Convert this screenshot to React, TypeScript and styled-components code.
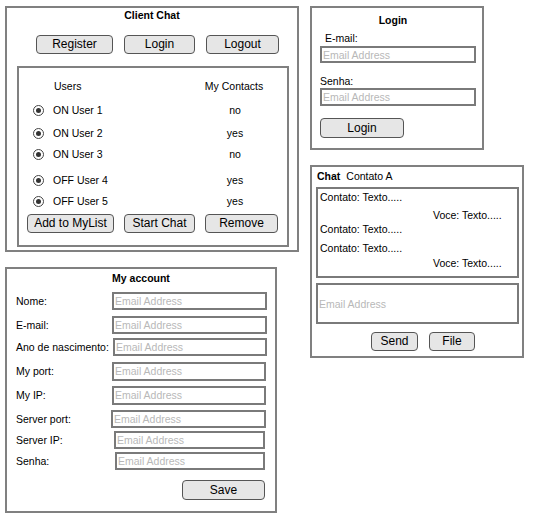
import React from "react";
import styled, { createGlobalStyle } from "styled-components";

const GlobalStyle = createGlobalStyle`
	body {
		margin: 0;
		background: #fff;
		font-family: "Liberation Sans", Arial, sans-serif;
		color: #000;
	}
`;

const Page = styled.div`
	display: flex;
	gap: 11px;
	padding: 6px 0 0 5px;
	font-size: 10.5px;
	line-height: 14px;
`;

const Column = styled.div`
	display: flex;
	flex-direction: column;
	gap: 15px;
	align-items: flex-start;
`;

const Panel = styled.div<{ $w: number; $h: number }>`
	box-sizing: border-box;
	width: ${(p) => p.$w}px;
	height: ${(p) => p.$h}px;
	border: 2px solid #808080;
	display: flex;
	flex-direction: column;
	align-items: flex-start;
`;

const Title = styled.div<{ $mt: number; $pr?: number }>`
	align-self: stretch;
	margin-top: ${(p) => p.$mt}px;
	padding-right: ${(p) => p.$pr || 0}px;
	text-align: center;
	font-weight: bold;
	line-height: 14px;
`;

const Button = styled.button<{ $w: number; $h?: number }>`
	box-sizing: border-box;
	width: ${(p) => p.$w}px;
	height: ${(p) => p.$h || 19}px;
	padding: 0 0 1px;
	border: 1px solid #555;
	border-radius: 4px;
	background: #e6e6e6;
	font-family: "Liberation Sans", Arial, sans-serif;
	font-size: 12px;
	color: #000;
	flex: none;
`;

const ButtonRow = styled.div<{ $mt: number; $pl: number; $gap: number }>`
	display: flex;
	gap: ${(p) => p.$gap}px;
	margin-top: ${(p) => p.$mt}px;
	padding-left: ${(p) => p.$pl}px;
`;

const UserBox = styled.div`
	box-sizing: border-box;
	margin: 12px 0 0 10px;
	width: 272px;
	height: 181px;
	border: 2px solid #808080;
	display: flex;
	flex-direction: column;
`;

const HeaderRow = styled.div`
	display: flex;
	height: 16px;
	align-items: center;
	margin-top: 10px;
`;

const UsersHead = styled.div`
	width: 140px;
	padding-left: 35px;
`;

const ContactCell = styled.div`
	width: 80px;
	text-align: center;
`;

const UserRow = styled.div<{ $mt: number }>`
	display: flex;
	align-items: center;
	height: 20px;
	margin-top: ${(p) => p.$mt}px;
`;

const Radio = styled.span`
	box-sizing: border-box;
	width: 11px;
	height: 11px;
	margin-left: 14px;
	border: 1.5px solid #444;
	border-radius: 50%;
	display: flex;
	align-items: center;
	justify-content: center;
	&::after {
		content: "";
		width: 5px;
		height: 5px;
		border-radius: 50%;
		background: #333;
	}
`;

const UserName = styled.span`
	width: 142px;
	margin-left: 9px;
`;

const FieldLabel = styled.div<{ $mt: number; $pl: number }>`
	margin-top: ${(p) => p.$mt}px;
	padding-left: ${(p) => p.$pl}px;
	line-height: 14px;
`;

const Field = styled.input<{ $w: number; $h: number; $ml?: number; $mt?: number }>`
	box-sizing: border-box;
	width: ${(p) => p.$w}px;
	height: ${(p) => p.$h}px;
	margin: ${(p) => p.$mt || 0}px 0 0 ${(p) => p.$ml || 0}px;
	padding: 0 0 0 1px;
	border: 2px solid #7a7a7a;
	border-radius: 0;
	outline: none;
	font-family: "Liberation Sans", Arial, sans-serif;
	font-size: 10.5px;
	&::placeholder {
		color: #b8b8b8;
	}
`;

const ChatTitle = styled.div`
	margin-top: 2px;
	padding-left: 5px;
	line-height: 14px;
	b {
		margin-right: 6px;
	}
`;

const MessageBox = styled.div`
	box-sizing: border-box;
	width: 203px;
	height: 91px;
	margin: 4px 0 0 4px;
	border: 2px solid #7a7a7a;
	display: flex;
	flex-direction: column;
`;

const Message = styled.div<{ $mt: number; $indent: number }>`
	margin-top: ${(p) => p.$mt}px;
	padding-left: ${(p) => p.$indent}px;
	line-height: 14px;
`;

const AccountRow = styled.div<{ $mt: number }>`
	display: flex;
	align-items: center;
	height: 18px;
	margin-top: ${(p) => p.$mt}px;
`;

const AccountLabel = styled.span`
	width: 96px;
	padding-left: 9px;
	flex: none;
`;

const users = [
	{ name: "ON User 1", contact: "no", mt: 6 },
	{ name: "ON User 2", contact: "yes", mt: 3 },
	{ name: "ON User 3", contact: "no", mt: 1 },
	{ name: "OFF User 4", contact: "yes", mt: 6 },
	{ name: "OFF User 5", contact: "yes", mt: 1 },
];

const messages = [
	{ text: "Contato: Texto.....", mt: 1, indent: 2 },
	{ text: "Voce: Texto.....", mt: 4, indent: 115 },
	{ text: "Contato: Texto.....", mt: 0, indent: 2 },
	{ text: "Contato: Texto.....", mt: 5, indent: 2 },
	{ text: "Voce: Texto.....", mt: 1, indent: 115 },
];

// x = left edge of the input inside the panel, r = right edge
const account = [
	{ label: "Nome:", mt: 7, x: 112, r: 267, h: 18 },
	{ label: "E-mail:", mt: 6, x: 112, r: 267, h: 18 },
	{ label: "Ano de nascimento:", mt: 4, x: 113, r: 267, h: 18 },
	{ label: "My port:", mt: 6, x: 112, r: 266, h: 19 },
	{ label: "My IP:", mt: 6, x: 112, r: 266, h: 19 },
	{ label: "Server port:", mt: 6, x: 111, r: 266, h: 18 },
	{ label: "Server IP:", mt: 3, x: 114, r: 265, h: 18 },
	{ label: "Senha:", mt: 3, x: 115, r: 265, h: 18 },
];

const ClientChat = () => (
	<Panel $w={294} $h={246}>
		<Title $mt={0}>Client Chat</Title>
		<ButtonRow $mt={13} $pl={29} $gap={11}>
			<Button $w={77}>Register</Button>
			<Button $w={71}>Login</Button>
			<Button $w={73}>Logout</Button>
		</ButtonRow>
		<UserBox>
			<HeaderRow>
				<UsersHead>Users</UsersHead>
				<ContactCell>My Contacts</ContactCell>
			</HeaderRow>
			{users.map((u) => (
				<UserRow key={u.name} $mt={u.mt}>
					<Radio />
					<UserName>{u.name}</UserName>
					<ContactCell>{u.contact}</ContactCell>
				</UserRow>
			))}
			<ButtonRow $mt={3} $pl={8} $gap={10}>
				<Button $w={87}>Add to MyList</Button>
				<Button $w={71}>Start Chat</Button>
				<Button $w={73}>Remove</Button>
			</ButtonRow>
		</UserBox>
	</Panel>
);

const MyAccount = () => (
	<Panel $w={272} $h={246}>
		<Title $mt={2}>My account</Title>
		{account.map((a) => (
			<AccountRow key={a.label} $mt={a.mt}>
				<AccountLabel>{a.label}</AccountLabel>
				<Field
					placeholder="Email Address"
					$w={a.r - a.x}
					$h={a.h}
					$ml={a.x - 112}
				/>
			</AccountRow>
		))}
		<ButtonRow $mt={10} $pl={175} $gap={0}>
			<Button $w={83} $h={20}>
				Save
			</Button>
		</ButtonRow>
	</Panel>
);

const Login = () => (
	<Panel $w={174} $h={144}>
		<Title $mt={5} $pr={8}>
			Login
		</Title>
		<FieldLabel $mt={4} $pl={13}>
			E-mail:
		</FieldLabel>
		<Field placeholder="Email Address" $w={156} $h={17} $ml={8} $mt={1} />
		<FieldLabel $mt={11} $pl={8}>
			Senha:
		</FieldLabel>
		<Field placeholder="Email Address" $w={156} $h={18} $ml={8} />
		<ButtonRow $mt={12} $pl={8} $gap={0}>
			<Button $w={84} $h={20}>
				Login
			</Button>
		</ButtonRow>
	</Panel>
);

const Chat = () => (
	<Panel $w={214} $h={193}>
		<ChatTitle>
			<b>Chat</b>Contato A
		</ChatTitle>
		<MessageBox>
			{messages.map((m, i) => (
				<Message key={i} $mt={m.mt} $indent={m.indent}>
					{m.text}
				</Message>
			))}
		</MessageBox>
		<Field placeholder="Email Address" $w={203} $h={41} $ml={4} $mt={5} />
		<ButtonRow $mt={8} $pl={59} $gap={11}>
			<Button $w={47}>Send</Button>
			<Button $w={46}>File</Button>
		</ButtonRow>
	</Panel>
);

export default function App() {
	return (
		<>
			<GlobalStyle />
			<Page>
				<Column>
					<ClientChat />
					<MyAccount />
				</Column>
				<Column>
					<Login />
					<Chat />
				</Column>
			</Page>
		</>
	);
}
